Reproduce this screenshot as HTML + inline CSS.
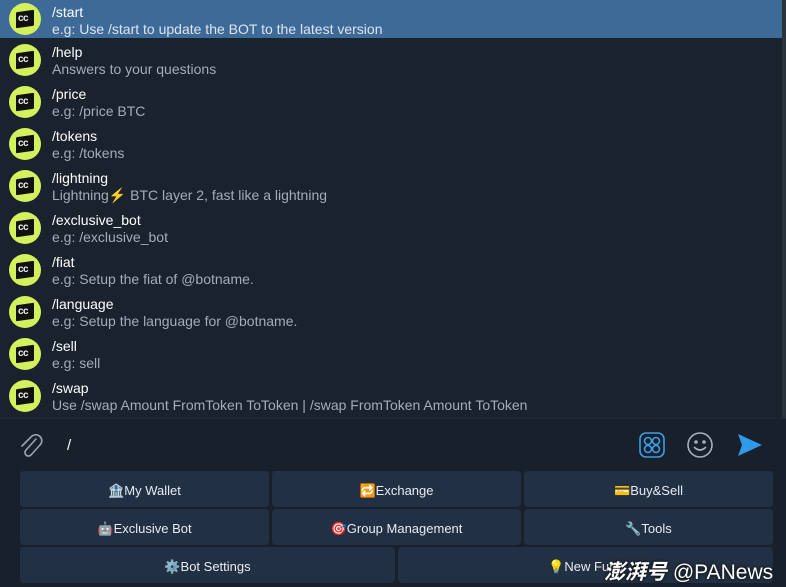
<!DOCTYPE html>
<html><head><meta charset="utf-8"><style>
*{margin:0;padding:0;box-sizing:border-box}
body{width:786px;height:586px;background:#18212b;font-family:"Liberation Sans","Noto Sans CJK SC",sans-serif;overflow:hidden;position:relative}
.list{position:absolute;left:0;top:0;width:782px;height:418px;background:#1a222d}
.row{position:absolute;left:0;width:782px;height:42px}
.row.sel{background:#3e6a98;top:-4px}
.av{position:absolute;left:9px;top:6px;width:32px;height:32px;border-radius:50%;background:#d3f15c}
.av i{position:absolute;left:7px;top:8px;width:18px;height:16px;background:#111;transform:skewY(-8deg);border-radius:1px}
.av b{position:absolute;left:9px;top:10px;color:#eee;font:bold 10px "Liberation Sans",sans-serif;letter-spacing:-0.5px}
.n{position:absolute;left:52px;top:6px;color:#fff;font-size:14px}
.d{position:absolute;left:52px;top:23px;color:#a3acb7;font-size:14px}
.sel .d{color:#dbe5f0}
.sb{position:absolute;left:782px;top:0;width:4px;height:418px;background:#2a323c}
.in{position:absolute;left:0;top:418px;width:786px;height:50px;background:#18212b;border-top:1px solid #222c38}
.k{position:absolute;height:36px;background:#223043;border-radius:4px;color:#e6ecf2;font-size:13px;text-align:center;line-height:40px}
</style></head><body>
<div class="list">
<div class="row sel" style="top:-4px"><div class="av" style="top:7px"><i></i><b>cc</b></div><div class="n" style="top:8px">/start</div><div class="d" style="top:25px">e.g: Use /start to update the BOT to the latest version</div></div>
<div class="row" style="top:38px"><div class="av"><i></i><b>cc</b></div><div class="n">/help</div><div class="d">Answers to your questions</div></div>
<div class="row" style="top:80px"><div class="av"><i></i><b>cc</b></div><div class="n">/price</div><div class="d">e.g: /price BTC</div></div>
<div class="row" style="top:122px"><div class="av"><i></i><b>cc</b></div><div class="n">/tokens</div><div class="d">e.g: /tokens</div></div>
<div class="row" style="top:164px"><div class="av"><i></i><b>cc</b></div><div class="n">/lightning</div><div class="d">Lightning<span style="color:#f5c518">⚡</span> BTC layer 2, fast like a lightning</div></div>
<div class="row" style="top:206px"><div class="av"><i></i><b>cc</b></div><div class="n">/exclusive_bot</div><div class="d">e.g: /exclusive_bot</div></div>
<div class="row" style="top:248px"><div class="av"><i></i><b>cc</b></div><div class="n">/fiat</div><div class="d">e.g: Setup the fiat of @botname.</div></div>
<div class="row" style="top:290px"><div class="av"><i></i><b>cc</b></div><div class="n">/language</div><div class="d">e.g: Setup the language for @botname.</div></div>
<div class="row" style="top:332px"><div class="av"><i></i><b>cc</b></div><div class="n">/sell</div><div class="d">e.g: sell</div></div>
<div class="row" style="top:374px"><div class="av"><i></i><b>cc</b></div><div class="n">/swap</div><div class="d">Use /swap Amount FromToken ToToken | /swap FromToken Amount ToToken</div></div>
</div>
<div class="sb"></div>
<div class="in">
<svg style="position:absolute;left:18px;top:12px" width="26" height="28" viewBox="0 0 26 28" fill="none" stroke="#9aa4ae" stroke-width="1.6" stroke-linecap="round"><path d="M18 8 L8 19 a3.5 3.5 0 0 0 5 5 L22 14 a6 6 0 0 0 -8.5 -8.5 L4 15"/></svg>
<div style="position:absolute;left:67px;top:18px;color:#fff;font-size:15px">/</div>
<svg style="position:absolute;left:638px;top:12px" width="28" height="28" viewBox="0 0 28 28" fill="none" stroke="#3a9ee8" stroke-width="1.6"><rect x="2" y="2" width="24" height="24" rx="6"/><circle cx="10" cy="10" r="3.5"/><circle cx="18" cy="10" r="3.5"/><circle cx="10" cy="18" r="3.5"/><circle cx="18" cy="18" r="3.5"/></svg>
<svg style="position:absolute;left:686px;top:12px" width="28" height="28" viewBox="0 0 28 28" fill="none" stroke="#a7b0ba" stroke-width="1.6"><circle cx="14" cy="14" r="12"/><circle cx="10" cy="11" r="1" fill="#a7b0ba"/><circle cx="18" cy="11" r="1" fill="#a7b0ba"/><path d="M8 16 Q14 22 20 16"/></svg>
<svg style="position:absolute;left:737px;top:14px" width="26" height="24" viewBox="0 0 26 24"><path d="M1 1 L25 12 L1 23 L5 12 Z" fill="#2f9be8"/></svg>
</div>
<div class="k" style="left:20px;top:471px;width:249px">🏦My Wallet</div>
<div class="k" style="left:272px;top:471px;width:249px">🔁Exchange</div>
<div class="k" style="left:524px;top:471px;width:249px">💳Buy&amp;Sell</div>
<div class="k" style="left:20px;top:509px;width:249px">🤖Exclusive Bot</div>
<div class="k" style="left:272px;top:509px;width:249px">🎯Group Management</div>
<div class="k" style="left:524px;top:509px;width:249px">🔧Tools</div>
<div class="k" style="left:20px;top:547px;width:375px">⚙️Bot Settings</div>
<div class="k" style="left:398px;top:547px;width:375px">💡New Func</div>
<div style="position:absolute;left:604px;top:556px;color:#fff;font-size:21px;font-weight:bold;font-style:italic;text-shadow:0 0 3px #000;white-space:nowrap">澎湃号 <span style="font-style:normal;font-weight:normal">@PANews</span></div>
</body></html>
